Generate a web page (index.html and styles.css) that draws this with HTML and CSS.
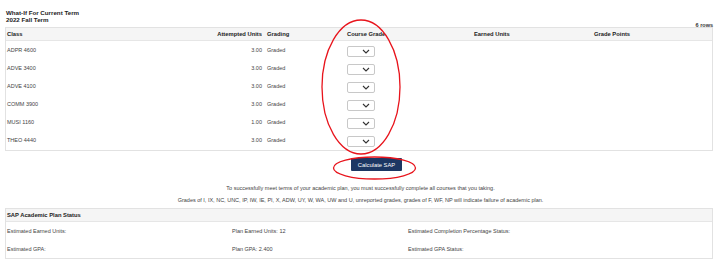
FILE: index.html
```html
<!DOCTYPE html>
<html>
<head>
<meta charset="utf-8">
<link rel="stylesheet" href="styles.css">
</head>
<body>
<div class="page">
  <div class="title">
    <div>What-If For Current Term</div>
    <div>2022 Fall Term</div>
  </div>
  <div class="rowcount">6 rows</div>
  <div class="box grid">
    <div class="hdr c1">Class</div>
    <div class="hdr c2">Attempted Units</div>
    <div class="hdr c3">Grading</div>
    <div class="hdr c4">Course Grade</div>
    <div class="hdr c5">Earned Units</div>
    <div class="hdr c6">Grade Points</div>

    <div class="cell c1">ADPR 4600</div><div class="cell c2">3.00</div><div class="cell c3">Graded</div><div class="cell c4"><div class="sel"><svg width="8" height="5" viewBox="0 0 8 5"><path d="M1 1 L4 4 L7 1" fill="none" stroke="#333" stroke-width="1.1"/></svg></div></div><div class="cell c5"></div><div class="cell c6"></div>
    <div class="cell c1">ADVE 3400</div><div class="cell c2">3.00</div><div class="cell c3">Graded</div><div class="cell c4"><div class="sel"><svg width="8" height="5" viewBox="0 0 8 5"><path d="M1 1 L4 4 L7 1" fill="none" stroke="#333" stroke-width="1.1"/></svg></div></div><div class="cell c5"></div><div class="cell c6"></div>
    <div class="cell c1">ADVE 4100</div><div class="cell c2">3.00</div><div class="cell c3">Graded</div><div class="cell c4"><div class="sel"><svg width="8" height="5" viewBox="0 0 8 5"><path d="M1 1 L4 4 L7 1" fill="none" stroke="#333" stroke-width="1.1"/></svg></div></div><div class="cell c5"></div><div class="cell c6"></div>
    <div class="cell c1">COMM 3900</div><div class="cell c2">3.00</div><div class="cell c3">Graded</div><div class="cell c4"><div class="sel"><svg width="8" height="5" viewBox="0 0 8 5"><path d="M1 1 L4 4 L7 1" fill="none" stroke="#333" stroke-width="1.1"/></svg></div></div><div class="cell c5"></div><div class="cell c6"></div>
    <div class="cell c1">MUSI 1160</div><div class="cell c2">1.00</div><div class="cell c3">Graded</div><div class="cell c4"><div class="sel"><svg width="8" height="5" viewBox="0 0 8 5"><path d="M1 1 L4 4 L7 1" fill="none" stroke="#333" stroke-width="1.1"/></svg></div></div><div class="cell c5"></div><div class="cell c6"></div>
    <div class="cell c1">THEO 4440</div><div class="cell c2">3.00</div><div class="cell c3">Graded</div><div class="cell c4"><div class="sel"><svg width="8" height="5" viewBox="0 0 8 5"><path d="M1 1 L4 4 L7 1" fill="none" stroke="#333" stroke-width="1.1"/></svg></div></div><div class="cell c5"></div><div class="cell c6"></div>
  </div>
  <div class="btnrow"><button class="btn">Calculate SAP</button></div>
  <div class="notes">
    <p>To successfully meet terms of your academic plan, you must successfully complete all courses that you taking.</p>
    <p>Grades of I, IX, NC, UNC, IP, IW, IE, PI, X, ADW, UY, W, WA, UW and U, unreported grades, grades of F, WF, NP will indicate failure of academic plan.</p>
  </div>
  <div class="box sap">
    <div class="saphdr">SAP Academic Plan Status</div>
    <div class="saprow"><span>Estimated Earned Units:</span><span>Plan Earned Units: 12</span><span>Estimated Completion Percentage Status:</span></div>
    <div class="saprow"><span>Estimated GPA:</span><span>Plan GPA: 2.400</span><span>Estimated GPA Status:</span></div>
  </div>
  <svg class="marks" width="720" height="265" viewBox="0 0 720 265">
    <ellipse cx="361" cy="87" rx="39" ry="67" fill="none" stroke="#e8141c" stroke-width="1.3"/>
    <ellipse cx="374.5" cy="168" rx="41" ry="11" fill="none" stroke="#e8141c" stroke-width="1.3"/>
  </svg>
</div>
</body>
</html>
```
FILE: styles.css
```css
html, body {
  margin: 0;
  padding: 0;
  background: #fff;
}
body {
  font-family: "Liberation Sans", Arial, sans-serif;
  font-size: 5.5px;
  color: #444;
}
.page {
  position: relative;
  width: 720px;
  height: 265px;
  padding: 9px 7px 0 5px;
  box-sizing: border-box;
  overflow: hidden;
}
.title {
  font-weight: bold;
  font-size: 6.2px;
  color: #222;
  line-height: 7px;
  padding-left: 1px;
}
.rowcount {
  text-align: right;
  font-weight: bold;
  color: #333;
  line-height: 5px;
  height: 4px;
}
.box {
  border: 1px solid #e2e2e2;
}
.grid {
  display: grid;
  grid-template-columns: 181px 75px 85px 127px 120px 1fr;
  grid-auto-rows: 18px;
  grid-template-rows: 13px;
  padding-bottom: 1px;
}
.hdr {
  background: #f5f5f5;
  border-bottom: 1px solid #e6e6e6;
  font-weight: bold;
  font-size: 5.8px;
  color: #222;
  display: flex;
  align-items: center;
  box-sizing: border-box;
  height: 13px;
}
.cell {
  display: flex;
  align-items: center;
}
.c1 { padding-left: 1px; }
.c2 { justify-content: flex-end; }
.c3 { padding-left: 5px; }
.c4 { padding-left: 0; }
.sel {
  width: 22px;
  height: 9px;
  border: 1px solid #c8c8c8;
  border-radius: 2px;
  background: #fff;
  display: flex;
  justify-content: flex-end;
  align-items: center;
  padding-right: 4px;
  margin-top: 2px;
}
.sel svg { display: block; }
.btnrow {
  display: flex;
  padding-left: 346px;
  margin-top: 7px;
}
.btn {
  width: 51px;
  height: 13px;
  border: none;
  border-radius: 1px;
  background: #1c3763;
  color: #fff;
  font-family: "Liberation Sans", Arial, sans-serif;
  font-size: 5.8px;
  padding: 0;
}
.notes {
  margin-top: 11px;
  text-align: center;
  padding-left: 3px;
}
.notes p {
  margin: 0;
  line-height: 12px;
}
.sap {
  margin-top: 2px;
}
.saphdr {
  height: 13px;
  background: #f5f5f5;
  border-bottom: 1px solid #e6e6e6;
  font-weight: bold;
  font-size: 5.8px;
  color: #222;
  display: flex;
  align-items: center;
  padding-left: 1px;
  box-sizing: border-box;
}
.saprow {
  display: grid;
  grid-template-columns: 225px 176px 1fr;
  height: 18px;
  align-items: center;
  padding-left: 1px;
}
.marks {
  position: absolute;
  left: 0;
  top: 0;
  pointer-events: none;
}
```
